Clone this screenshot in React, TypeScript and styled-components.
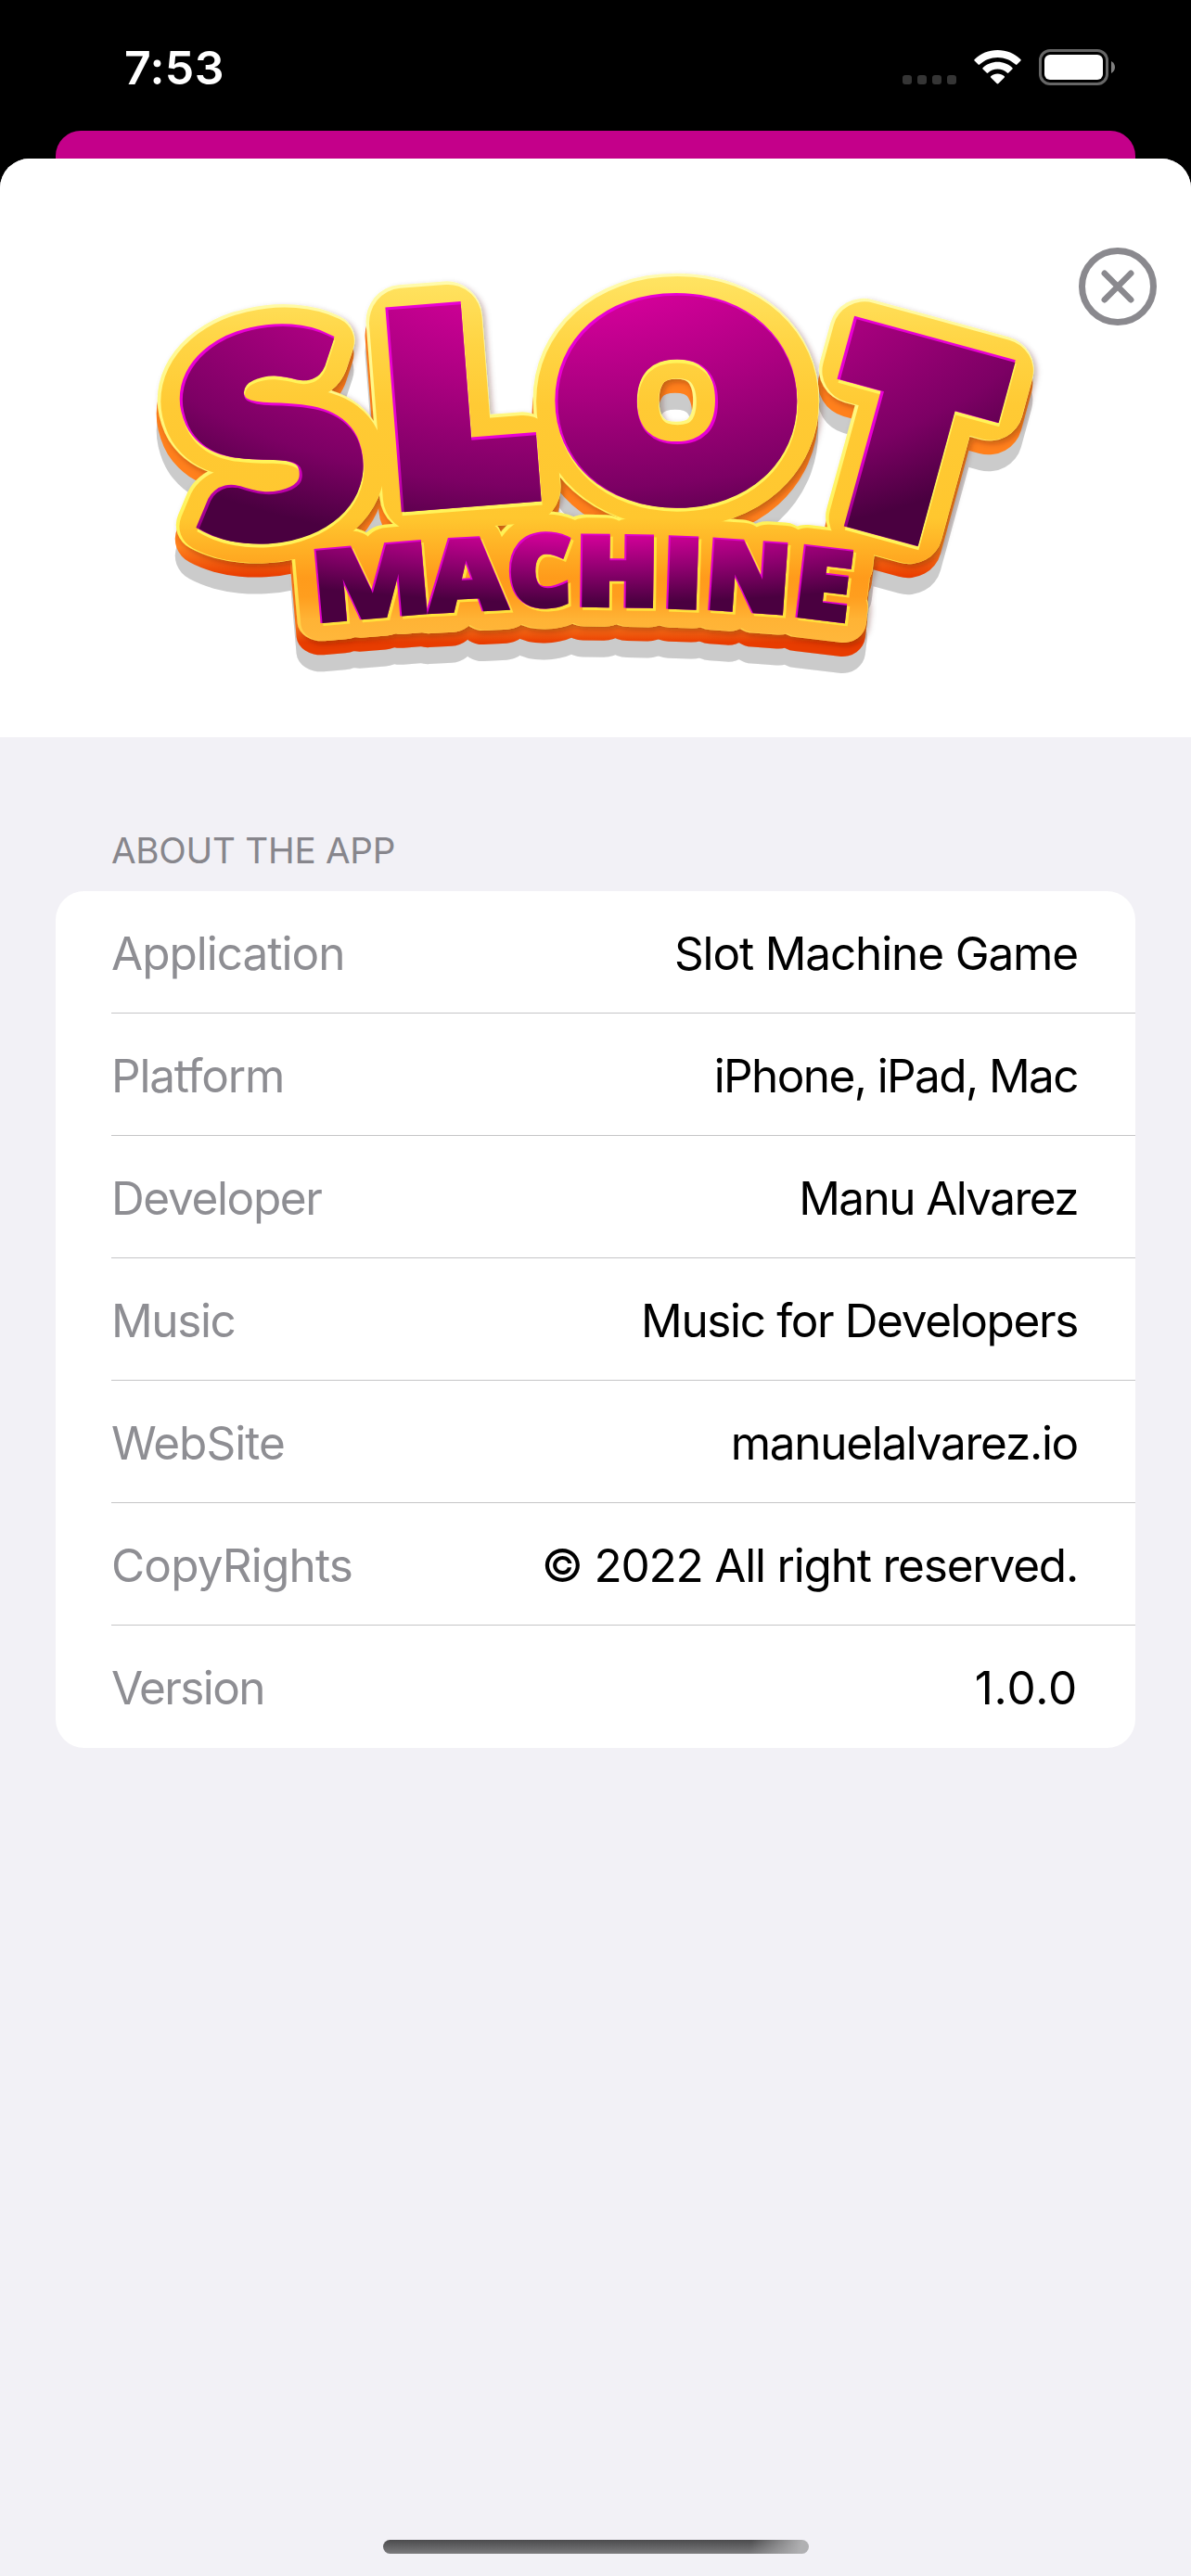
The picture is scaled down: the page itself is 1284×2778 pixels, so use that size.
import React from "react";
import styled, { createGlobalStyle } from "styled-components";

const GlobalStyle = createGlobalStyle`
  *, *::before, *::after { box-sizing: border-box; }
  body { margin: 0; background: #000; }
`;

const Screen = styled.div`
  width: 1284px;
  height: 2778px;
  display: flex;
  flex-direction: column;
  overflow: hidden;
  background: #000;
  font-family: Inter, "Liberation Sans", sans-serif;
`;

const StatusBar = styled.header`
  height: 141px;
  flex: none;
  display: flex;
  align-items: flex-start;
  justify-content: space-between;
  padding: 49px 82px 0 134px;
  color: #fff;
`;

const Clock = styled.time`
  font-size: 50px;
  line-height: 48px;
  font-weight: 600;
  letter-spacing: 0.4px;
`;

const StatusIcons = styled.div`
  display: flex;
  align-items: flex-start;
  padding-top: 4px;
`;

const SignalDots = styled.div`
  display: flex;
  gap: 6px;
  padding-top: 28px;
  margin-right: 19px;
`;

const Dot = styled.span`
  width: 10px;
  height: 10px;
  border-radius: 3px;
  background: #353535;
`;

const WifiIcon = styled.svg`
  width: 51px;
  height: 39px;
  margin-right: 19px;
`;

const BatteryIcon = styled.svg`
  width: 82px;
  height: 39px;
`;

const PreviousScreen = styled.div`
  flex: none;
  height: 30px;
  margin: 0 60px;
  border-radius: 27px 27px 0 0;
  background: #c4008a;
`;

const Sheet = styled.main`
  flex: 1;
  display: flex;
  flex-direction: column;
  overflow: hidden;
  border-radius: 32px 32px 0 0;
  background: #f2f1f6;
`;

const Hero = styled.section`
  position: relative;
  flex: none;
  height: 624px;
  background: #fff;
`;

const LogoSvg = styled.svg`
  display: block;
  width: 1284px;
  height: 624px;
`;

const CloseButton = styled.button`
  position: absolute;
  top: 96px;
  right: 37px;
  width: 84px;
  height: 84px;
  padding: 0;
  border: 0;
  background: none;

  svg { display: block; }
`;

const Section = styled.section`
  flex: 1;
  display: flex;
  flex-direction: column;
  padding: 98px 60px 0;
`;

const SectionTitle = styled.h2`
  margin: 0;
  padding: 0 60px;
  height: 68px;
  font-size: 38.6px;
  line-height: 48px;
  font-weight: 400;
  letter-spacing: -0.25px;
  color: #87868c;
`;

const Card = styled.dl`
  margin: 0;
  border-radius: 31px;
  overflow: hidden;
  background: #fff;
`;

const Row = styled.div`
  height: 132px;
  margin-left: 60px;
  padding: 2px 62px 0 0;
  display: flex;
  align-items: center;
  justify-content: space-between;
  font-size: 49.5px;
  line-height: 60px;
  white-space: nowrap;

  &:not(:last-child) { border-bottom: 1px solid #c5c5c7; }
`;

const Label = styled.dt<{ $tracking: number }>`
  color: #8e8e93;
  letter-spacing: ${(p) => p.$tracking}px;
`;

const Value = styled.dd<{ $tracking: number }>`
  margin: 0;
  color: #000;
  letter-spacing: ${(p) => p.$tracking}px;
`;

const HomeArea = styled.footer`
  margin-top: auto;
  height: 39px;
  display: flex;
  justify-content: center;
`;

const HomeIndicator = styled.div`
  width: 459px;
  height: 15px;
  margin-left: 1px;
  border-radius: 8px;
  background:
    linear-gradient(100deg, rgba(176, 176, 178, 0) 86%, #b0b0b2 98%),
    linear-gradient(#4b4b4d, #7b7b7d);
`;

type Glyph = {
  char: string;
  cx: number;
  cy: number;
  rotate: number;
  width: number;
  height: number;
  left: number;
  right: number;
  tall: number;
  weight: number;
  rounded?: boolean;
};

/* left, right and tall are the letter's ink bounds as fractions of the em */
const slot: Glyph[] = [
  { char: "S", cx: 290, cy: 468.5, rotate: -13, width: 190, height: 236, left: 0.02, right: 0.525, tall: 0.745, weight: 22, rounded: true },
  { char: "L", cx: 498, cy: 436, rotate: -4.5, width: 151, height: 221, left: 0.073, right: 0.537, tall: 0.714, weight: 33 },
  { char: "O", cx: 729.5, cy: 432, rotate: 0, width: 256, height: 235, left: 0.04, right: 0.775, tall: 0.745, weight: 41, rounded: true },
  { char: "T", cx: 979, cy: 471.5, rotate: 15.3, width: 183, height: 222, left: 0.02, right: 0.573, tall: 0.714, weight: 28 },
];

const machine: Glyph[] = [
  { char: "M", cx: 399, cy: 627, rotate: -5, width: 115, height: 81, left: 0.073, right: 0.885, tall: 0.714, weight: 5 },
  { char: "A", cx: 502.5, cy: 619.5, rotate: -3, width: 90, height: 81, left: 0, right: 0.73, tall: 0.714, weight: 6 },
  { char: "C", cx: 582, cy: 615, rotate: -1, width: 67, height: 84, left: 0.048, right: 0.622, tall: 0.74, weight: 8 },
  { char: "H", cx: 665.5, cy: 615.5, rotate: 0.8, width: 80, height: 80, left: 0.073, right: 0.7, tall: 0.714, weight: 9 },
  { char: "I", cx: 735.5, cy: 617.5, rotate: 2, width: 32, height: 80, left: 0.073, right: 0.27, tall: 0.714, weight: 8 },
  { char: "N", cx: 806, cy: 621.5, rotate: 4, width: 81, height: 79, left: 0.073, right: 0.755, tall: 0.714, weight: 8 },
  { char: "E", cx: 889, cy: 629.5, rotate: 6.8, width: 55, height: 80, left: 0.073, right: 0.51, tall: 0.714, weight: 5 },
];

function Letters({ glyphs, spread = 0, fill = "#fff" }: { glyphs: Glyph[]; spread?: number; fill?: string }) {
  return (
    <g fill={fill} stroke={fill} strokeLinejoin={spread > 10 ? "round" : "miter"} fontSize={100}>
      {glyphs.map((g) => {
        const sx = (g.width - g.weight) / (g.right - g.left) / 100;
        const sy = (g.height - g.weight) / g.tall / 100;
        return (
          <text
            key={g.char}
            fontFamily={g.rounded ? "Lato, sans-serif" : "'Open Sans', sans-serif"}
            fontWeight={g.rounded ? 900 : 800}
            transform={`translate(${g.cx} ${g.cy}) rotate(${g.rotate}) scale(${sx} ${sy})`}
            x={-50 * (g.left + g.right)}
            y={g.rounded ? 36.2 : 35.7}
            strokeWidth={(g.weight + spread) / Math.sqrt(sx * sy)}
          >
            {g.char}
          </text>
        );
      })}
    </g>
  );
}

const area = { x: 120, y: 260, width: 1044, height: 500 };
const maskArea = { ...area, maskUnits: "userSpaceOnUse" as const };

function Logo() {
  return (
    <LogoSvg viewBox="0 171 1284 624" role="img" aria-label="Slot Machine">
      <defs>
        <linearGradient id="gold" gradientUnits="userSpaceOnUse" x1="0" y1="292" x2="0" y2="696">
          <stop offset="0" stopColor="#ffe565" />
          <stop offset="0.2" stopColor="#ffd443" />
          <stop offset="0.36" stopColor="#ffca34" />
          <stop offset="0.66" stopColor="#ffc72f" />
          <stop offset="0.82" stopColor="#ff9b1b" />
          <stop offset="0.87" stopColor="#ff9e1e" />
          <stop offset="0.93" stopColor="#ffb335" />
          <stop offset="1" stopColor="#ffb83c" />
        </linearGradient>
        <linearGradient id="goldEdge" gradientUnits="userSpaceOnUse" x1="0" y1="292" x2="0" y2="696">
          <stop offset="0" stopColor="#fffbb0" />
          <stop offset="0.4" stopColor="#fff77c" />
          <stop offset="0.75" stopColor="#fff150" />
          <stop offset="1" stopColor="#ffc94a" />
        </linearGradient>
        <linearGradient id="depthSlot" gradientUnits="userSpaceOnUse" x1="0" y1="575" x2="0" y2="607">
          <stop offset="0" stopColor="#ff801c" />
          <stop offset="1" stopColor="#e83c00" />
        </linearGradient>
        <linearGradient id="depthMachine" gradientUnits="userSpaceOnUse" x1="0" y1="660" x2="0" y2="678">
          <stop offset="0" stopColor="#f9761a" />
          <stop offset="1" stopColor="#e83c00" />
        </linearGradient>
        <radialGradient id="purpleSlot" gradientUnits="userSpaceOnUse" cx="0" cy="0" r="1" gradientTransform="translate(620 250) scale(690 345)">
          <stop offset="0" stopColor="#e000a4" />
          <stop offset="0.22" stopColor="#d4009a" />
          <stop offset="0.5" stopColor="#ac0081" />
          <stop offset="0.8" stopColor="#7c0064" />
          <stop offset="1" stopColor="#4a0040" />
        </radialGradient>
        <radialGradient id="purpleMachine" gradientUnits="userSpaceOnUse" cx="0" cy="0" r="1" gradientTransform="translate(640 540) scale(600 115)">
          <stop offset="0.3" stopColor="#d8009c" />
          <stop offset="0.65" stopColor="#8e006f" />
          <stop offset="0.96" stopColor="#4a0040" />
        </radialGradient>
        <linearGradient id="pinkEdge" gradientUnits="userSpaceOnUse" x1="0" y1="480" x2="0" y2="580">
          <stop offset="0" stopColor="#e800d4" />
          <stop offset="1" stopColor="#8a007a" />
        </linearGradient>
        <filter id="contact" filterUnits="userSpaceOnUse" {...area}>
          <feDropShadow dx="3" dy="3" stdDeviation="3" floodColor="#501800" floodOpacity="0.35" />
        </filter>
        <mask id="slotOuter" {...maskArea}><Letters glyphs={slot} spread={45} /></mask>
        <mask id="machineOuter" {...maskArea}><Letters glyphs={machine} spread={44} /></mask>
        <mask id="allOuter" {...maskArea}>
          <Letters glyphs={slot} spread={45} />
          <Letters glyphs={machine} spread={44} />
        </mask>
        <mask id="allInner" {...maskArea}>
          <g transform="translate(1.5 1.5)">
            <Letters glyphs={slot} spread={41} />
            <Letters glyphs={machine} spread={40} />
          </g>
        </mask>
        <mask id="slotFace" {...maskArea}><Letters glyphs={slot} /></mask>
        <mask id="slotFaceInner" {...maskArea}>
          <g transform="translate(1.5 1.5)"><Letters glyphs={slot} spread={-3} /></g>
        </mask>
        <mask id="machineFaceInner" {...maskArea}>
          <g transform="translate(1 1)"><Letters glyphs={machine} spread={-2} /></g>
        </mask>
      </defs>

      <g transform="translate(-1 33)">
        <rect {...area} fill="#cbcbcb" mask="url(#allOuter)" />
      </g>
      <g transform="translate(-1 15)">
        <rect {...area} fill="url(#depthSlot)" mask="url(#slotOuter)" />
        <rect {...area} fill="url(#depthMachine)" mask="url(#machineOuter)" />
      </g>
      <g filter="url(#contact)">
        <rect {...area} fill="url(#goldEdge)" mask="url(#allOuter)" />
      </g>
      <rect {...area} fill="url(#gold)" mask="url(#allInner)" />

      <g transform="translate(1 4)"><Letters glyphs={slot} fill="#fff45a" /></g>
      <rect {...area} fill="url(#pinkEdge)" mask="url(#slotFace)" />
      <rect {...area} fill="url(#purpleSlot)" mask="url(#slotFaceInner)" />

      <g transform="translate(3 3)"><Letters glyphs={machine} fill="#ffe23c" /></g>
      <Letters glyphs={machine} fill="#e000cc" />
      <rect {...area} fill="url(#purpleMachine)" mask="url(#machineFaceInner)" />
    </LogoSvg>
  );
}

const details = [
  { label: "Application", value: "Slot Machine Game", labelTracking: -1, valueTracking: -1.15 },
  { label: "Platform", value: "iPhone, iPad, Mac", labelTracking: -1.2, valueTracking: -1.6 },
  { label: "Developer", value: "Manu Alvarez", labelTracking: -1.35, valueTracking: -1.6 },
  { label: "Music", value: "Music for Developers", labelTracking: -1.4, valueTracking: -1.37 },
  { label: "WebSite", value: "manuelalvarez.io", labelTracking: -1, valueTracking: -1.3 },
  { label: "CopyRights", value: "© 2022 All right reserved.", labelTracking: -0.85, valueTracking: -1.2 },
  { label: "Version", value: "1.0.0", labelTracking: -1.6, valueTracking: 0.8 },
];

export default function App() {
  return (
    <Screen>
      <GlobalStyle />
      <StatusBar>
        <Clock>7:53</Clock>
        <StatusIcons>
          <SignalDots>
            <Dot /><Dot /><Dot /><Dot />
          </SignalDots>
          <WifiIcon viewBox="0 0 51 39" fill="#fff">
            <path d="M25.500 1C35 1 43.800 4.700 50.300 10.900c.6.600.6 1.100.1 1.600l-4 4.100c-.5.500-1 .5-1.500 0C39.700 11.700 32.900 8.900 25.500 8.900S11.300 11.700 6.100 16.600c-.5.500-1 .5-1.500 0l-4-4.100c-.5-.5-.5-1 .1-1.600C7.200 4.700 16 1 25.500 1Z" />
            <path d="M25.500 13.700c6 0 11.600 2.300 15.800 6.200.6.600.6 1.100.1 1.600l-4.100 4.100c-.5.500-1 .5-1.500 0-2.700-2.500-6.300-4-10.300-4s-7.600 1.500-10.300 4c-.5.500-1 .5-1.500 0l-4.100-4.100c-.5-.5-.5-1 .1-1.600 4.200-3.900 9.800-6.200 15.800-6.200Z" />
            <path d="M25.500 26.400c2.700 0 5.200 1 7.100 2.700.6.500.6 1.100.1 1.600l-6.300 6.400c-.6.600-1.200.6-1.800 0l-6.300-6.400c-.5-.5-.5-1.100.1-1.600 1.900-1.700 4.400-2.700 7.100-2.700Z" />
          </WifiIcon>
          <BatteryIcon viewBox="0 0 82 39">
            <rect x="1.500" y="1.500" width="72" height="36" rx="10.500" fill="none" stroke="#666" strokeWidth="3" />
            <rect x="6" y="6" width="63" height="27" rx="6" fill="#fff" />
            <path d="M78 13c2.600 1.200 4 3.700 4 6.500s-1.400 5.300-4 6.500Z" fill="#808080" />
          </BatteryIcon>
        </StatusIcons>
      </StatusBar>
      <PreviousScreen />
      <Sheet>
        <Hero>
          <Logo />
          <CloseButton aria-label="Close">
            <svg width="84" height="84" viewBox="0 0 84 84" fill="none" stroke="#8a898e" strokeLinecap="round">
              <circle cx="42" cy="42" r="38.500" strokeWidth="7" />
              <path d="M27.800 27.800 56.200 56.200M56.200 27.800 27.800 56.200" strokeWidth="6.500" />
            </svg>
          </CloseButton>
        </Hero>
        <Section>
          <SectionTitle>ABOUT THE APP</SectionTitle>
          <Card>
            {details.map((d) => (
              <Row key={d.label}>
                <Label $tracking={d.labelTracking}>{d.label}</Label>
                <Value $tracking={d.valueTracking}>{d.value}</Value>
              </Row>
            ))}
          </Card>
        </Section>
        <HomeArea>
          <HomeIndicator />
        </HomeArea>
      </Sheet>
    </Screen>
  );
}
